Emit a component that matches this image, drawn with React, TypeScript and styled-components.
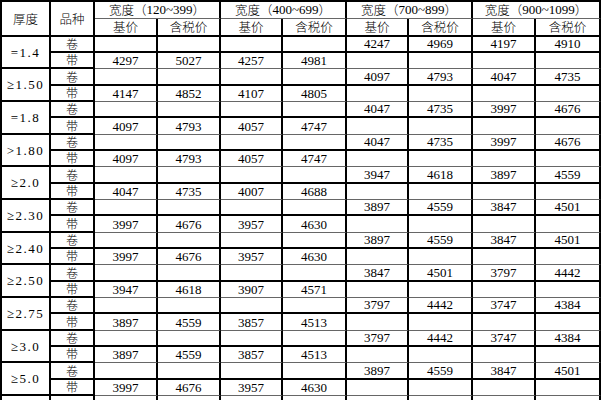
import styled, { createGlobalStyle } from 'styled-components';

const GlobalStyle = createGlobalStyle`
  html, body {
    margin: 0;
    padding: 0;
    background: #fff;
  }
  body {
    overflow: hidden;
  }
`;

const colWidths = [49, 44, 63, 63, 62, 64, 62, 64, 63, 65];
// 11 groups of 卷/带 plus one partial group below the fold
const bodyRows = Array.from({ length: 24 }, (_, i) => (i % 3 === 2 ? 17 : 16));

type Line = 'thick' | 'thin';

const Sheet = styled.div`
  display: grid;
  grid-template-columns: ${colWidths.map((w) => `${w}px`).join(' ')};
  grid-template-rows: 17px 18px ${bodyRows.map((h) => `${h}px`).join(' ')};
  width: 601px;
  height: 400px;
  overflow: hidden;
  box-sizing: border-box;
  border-left: 2px solid #000;
  border-top: 2px solid #000;
  font-family: "Liberation Serif", "Noto Sans CJK SC", serif;
  font-size: 13px;
  color: #000;
`;

const Cell = styled.div<{ $bottom?: Line; $rows?: number; $cols?: number }>`
  box-sizing: border-box;
  min-height: 0;
  display: flex;
  align-items: center;
  justify-content: center;
  border-right: 2px solid #000;
  border-bottom: ${(p) => (p.$bottom === 'thin' ? '1px solid #666' : '2px solid #000')};
  white-space: nowrap;
  line-height: 13px;
  grid-row: span ${(p) => p.$rows ?? 1};
  grid-column: span ${(p) => p.$cols ?? 1};
`;

const HeadCell = styled(Cell)`
  font-family: "Noto Sans CJK SC", sans-serif;
  font-weight: 300;
  font-size: 12.5px;
  line-height: 12px;
`;

const RangeText = styled.span`
  font-family: "Liberation Serif", "Noto Sans CJK SC", serif;
  font-weight: 400;
  font-size: 13px;
`;

const Thickness = styled(Cell)`
  letter-spacing: 1.5px;
`;

const Kind = styled(Cell)`
  font-family: "Noto Sans CJK SC", sans-serif;
  font-weight: 300;
  font-size: 12px;
  line-height: 12px;
`;

const Price = styled(Cell)`
  align-items: flex-end;
  padding-bottom: 1px;
`;

type Group = { label: string; left: string[]; right: string[] };

const groups: Group[] = [
  { label: '=1.4', left: ['4297', '5027', '4257', '4981'], right: ['4247', '4969', '4197', '4910'] },
  { label: '≥1.50', left: ['4147', '4852', '4107', '4805'], right: ['4097', '4793', '4047', '4735'] },
  { label: '=1.8', left: ['4097', '4793', '4057', '4747'], right: ['4047', '4735', '3997', '4676'] },
  { label: '>1.80', left: ['4097', '4793', '4057', '4747'], right: ['4047', '4735', '3997', '4676'] },
  { label: '≥2.0', left: ['4047', '4735', '4007', '4688'], right: ['3947', '4618', '3897', '4559'] },
  { label: '≥2.30', left: ['3997', '4676', '3957', '4630'], right: ['3897', '4559', '3847', '4501'] },
  { label: '≥2.40', left: ['3997', '4676', '3957', '4630'], right: ['3897', '4559', '3847', '4501'] },
  { label: '≥2.50', left: ['3947', '4618', '3907', '4571'], right: ['3847', '4501', '3797', '4442'] },
  { label: '≥2.75', left: ['3897', '4559', '3857', '4513'], right: ['3797', '4442', '3747', '4384'] },
  { label: '≥3.0', left: ['3897', '4559', '3857', '4513'], right: ['3797', '4442', '3747', '4384'] },
  { label: '≥5.0', left: ['3997', '4676', '3957', '4630'], right: ['3897', '4559', '3847', '4501'] },
  { label: '', left: ['', '', '', ''], right: ['', '', '', ''] },
];

const ranges = ['120~399', '400~699', '700~899', '900~1099'];
const empty = ['', '', '', ''];

export default function App() {
  return (
    <>
      <GlobalStyle />
      <Sheet>
        <HeadCell $rows={2}>厚度</HeadCell>
        <HeadCell $rows={2}>品种</HeadCell>
        {ranges.map((r) => (
          <HeadCell key={r} $cols={2} $bottom="thin">
            宽度（<RangeText>{r}</RangeText>）
          </HeadCell>
        ))}
        {ranges.map((r) => [
          <HeadCell key={r + 'a'}>基价</HeadCell>,
          <HeadCell key={r + 'b'}>含税价</HeadCell>,
        ])}

        {groups.map((g, gi) => [
          <Thickness key={gi + 't'} $rows={2}>
            {g.label}
          </Thickness>,
          <Kind key={gi + 'k1'}>{g.label ? '卷' : ''}</Kind>,
          ...empty.map((_, i) => <Price key={gi + 'l1' + i} />),
          ...g.right.map((v, i) => <Price key={gi + 'r1' + i}>{v}</Price>),
          <Kind key={gi + 'k2'}>{g.label ? '带' : ''}</Kind>,
          ...g.left.map((v, i) => (
            <Price key={gi + 'l2' + i} $bottom="thin">
              {v}
            </Price>
          )),
          ...empty.map((_, i) => <Price key={gi + 'r2' + i} $bottom="thin" />),
        ])}
      </Sheet>
    </>
  );
}
